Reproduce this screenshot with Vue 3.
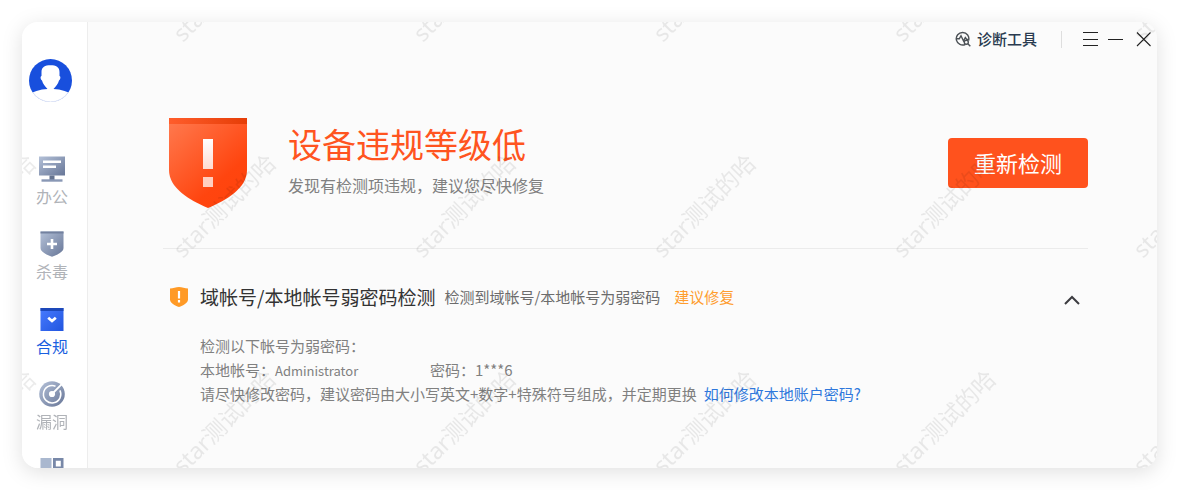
<script setup>
import { ref } from 'vue'

const navItems = [
  { id: 'office', label: '办公' },
  { id: 'antivirus', label: '杀毒' },
  { id: 'compliance', label: '合规' },
  { id: 'vulnerability', label: '漏洞' },
  { id: 'more' },
]
const active = ref('compliance')
const expanded = ref(true)
</script>

<template>
  <div class="page">
    <div class="window">
      <aside class="sidebar">
        <button class="avatar" type="button" aria-label="账户">
          <svg width="43" height="43" viewBox="0 0 43 43">
            <defs>
              <clipPath id="avatar-clip"><circle cx="21.5" cy="21.5" r="21.5" /></clipPath>
            </defs>
            <g clip-path="url(#avatar-clip)">
              <rect width="43" height="43" fill="#184fdd" />
              <path d="M0 36C6 31 14 30 21.5 30S37 31 43 36V43H0Z" fill="#fff" />
              <path d="M12.500 13C12.500 8 16 6.300 21.500 6.300S30.500 8 30.500 13V17C32 17.500 31.500 20.500 30 21.500C29 25 27 27 24.500 30V32H18.500V30C16 27 14 25 13 21.500C11.500 20.500 11 17.500 12.500 17Z" fill="#fff" />
            </g>
            <path d="M4 33.500A21 21 0 0 0 39 33.500" fill="none" stroke="#dfe5f6" />
          </svg>
        </button>

        <nav class="nav">
          <button
            v-for="item in navItems"
            :key="item.id"
            type="button"
            class="nav-item"
            :class="{ active: active === item.id }"
            :aria-label="item.label || '更多'"
            @click="active = item.id"
          >
            <svg v-if="item.id === 'office'" width="26" height="26" viewBox="0 0 26 26">
              <defs>
                <linearGradient id="steel" x1="0" y1="0" x2="1" y2="1">
                  <stop offset="0" stop-color="#b4c1d8" />
                  <stop offset="1" stop-color="#677697" />
                </linearGradient>
              </defs>
              <rect y="0.500" width="26" height="19" fill="url(#steel)" />
              <path d="M4 5.700H22M4 10.700H17" stroke="#fff" stroke-width="2.400" />
              <rect x="10.500" y="19.500" width="5" height="4.500" fill="#65738f" />
              <rect x="2.500" y="23.300" width="21" height="2.400" fill="#8998b5" />
            </svg>
            <svg v-else-if="item.id === 'antivirus'" width="26" height="26" viewBox="0 0 26 26">
              <path d="M1.500 0.500H24.500V17C24.500 21 18 24 13 25.800C8 24 1.500 21 1.500 17Z" fill="url(#steel)" />
              <path d="M1.500 0.500H24.500V2.500H1.500Z" fill="#73819f" />
              <path d="M13 8V18M8 13H18" stroke="#fff" stroke-width="2.600" />
            </svg>
            <svg v-else-if="item.id === 'compliance'" width="26" height="26" viewBox="0 0 26 26">
              <defs>
                <linearGradient id="azure" x1="0" y1="0" x2="1" y2="1">
                  <stop offset="0" stop-color="#487bff" />
                  <stop offset="1" stop-color="#2155df" />
                </linearGradient>
              </defs>
              <rect x="1.500" y="2" width="23" height="23" fill="url(#azure)" />
              <rect x="1.500" y="2" width="23" height="3" fill="#1d48b9" />
              <path d="M9.200 11.700L13 15L16.800 11.700" fill="none" stroke="#fff" stroke-width="2.800" />
            </svg>
            <svg v-else-if="item.id === 'vulnerability'" width="26" height="26" viewBox="0 0 26 26">
              <circle cx="13" cy="13" r="12.800" fill="url(#steel)" />
              <path d="M16.500 5.200A8.700 8.700 0 1 0 20.900 9.300" fill="none" stroke="#fff" stroke-width="1.500" />
              <circle cx="13" cy="13" r="3.100" fill="#fff" />
              <path d="M13 13L23 2.800" stroke="#fff" stroke-width="1.800" />
            </svg>
            <svg v-else width="26" height="26" viewBox="0 0 26 26">
              <rect x="1.500" y="2" width="11" height="11" fill="#aab8cf" />
              <path d="M14 2H24.500V13H14ZM16.800 4.800V10.500H21.800V4.800Z" fill="#7888a8" fill-rule="evenodd" />
              <rect x="1.500" y="14.500" width="11" height="10.500" fill="#8e9dba" />
              <rect x="14" y="14.500" width="10.500" height="10.500" fill="#7888a8" />
            </svg>
            <span v-if="item.label" class="nav-label">{{ item.label }}</span>
          </button>
        </nav>
      </aside>

      <main class="main">
        <header class="topbar">
          <button class="tool" type="button">
            <svg width="16" height="16" viewBox="0 0 16 16" fill="none" stroke="#4d5257" stroke-width="1.400">
              <path d="M10.500 13.300A6.300 6.300 0 1 1 13.600 9.500" />
              <path d="M1.500 7.800H4.300L6 4.700L8.500 10L10.300 6.500L11.800 8.500H14" />
              <circle cx="11.300" cy="11.300" r="2" />
              <path d="M12.800 12.800L15.300 15.300" />
            </svg>
            <span>诊断工具</span>
          </button>
          <span class="separator"></span>
          <div class="window-controls">
            <button type="button" aria-label="菜单">
              <svg width="16" height="16" viewBox="0 0 16 16"><path d="M0 1.500H15M0 8.500H15M0 14.500H15" stroke="#222" stroke-width="1.200" /></svg>
            </button>
            <button type="button" aria-label="最小化">
              <svg width="16" height="16" viewBox="0 0 16 16"><path d="M0 8.500H15" stroke="#222" stroke-width="1.200" /></svg>
            </button>
            <button type="button" class="close" aria-label="关闭">
              <svg width="16" height="16" viewBox="0 0 16 16"><path d="M1 1.500L14.500 15M14.500 1.500L1 15" stroke="#222" stroke-width="1.100" /></svg>
            </button>
          </div>
        </header>

        <section class="summary">
          <svg class="shield" width="78" height="90" viewBox="0 0 78 90">
            <defs>
              <linearGradient id="shield-body" x1="0" y1="0" x2="0.800" y2="1">
                <stop offset="0" stop-color="#ff7b50" />
                <stop offset="0.750" stop-color="#ff450f" />
                <stop offset="1" stop-color="#ff430c" />
              </linearGradient>
              <linearGradient id="shield-top">
                <stop offset="0" stop-color="#ff5d2b" />
                <stop offset="1" stop-color="#e53d07" />
              </linearGradient>
              <linearGradient id="shield-mark" x1="0" y1="0" x2="0" y2="1">
                <stop offset="0" stop-color="#fff" />
                <stop offset="1" stop-color="#ffdcd1" />
              </linearGradient>
              <linearGradient id="shield-shade" x1="0" y1="0" x2="1" y2="0.600">
                <stop offset="0" stop-color="#c92f00" stop-opacity="0.250" />
                <stop offset="0.500" stop-color="#c92f00" stop-opacity="0" />
              </linearGradient>
            </defs>
            <path d="M0 0H78V52C78 70 58 82 39 90C20 82 0 70 0 52Z" fill="url(#shield-body)" />
            <rect width="78" height="6" fill="url(#shield-top)" />
            <path d="M44 21L56 33V70L46 76L34 69L44 69Z" fill="url(#shield-shade)" />
            <rect x="34" y="21" width="10" height="30" fill="url(#shield-mark)" />
            <rect x="34" y="59" width="10" height="10" fill="#ffcfc0" />
          </svg>
          <div class="summary-text">
            <h1>设备违规等级低</h1>
            <p>发现有检测项违规，建议您尽快修复</p>
          </div>
          <button class="recheck" type="button">重新检测</button>
        </section>

        <section class="check">
          <div class="check-head">
            <svg width="18" height="20" viewBox="0 0 18 20">
              <path d="M0 1.500C3 1.500 6 0 9 0S15 1.500 18 1.500V12.500C18 16 13 18.500 9 20C5 18.500 0 16 0 12.500Z" fill="#ff9a26" />
              <path d="M9 4V11.500M9 13V15.500" stroke="#fff" stroke-width="2.200" />
            </svg>
            <h2>域帐号/本地帐号弱密码检测</h2>
            <span class="check-desc">检测到域帐号/本地帐号为弱密码</span>
            <span class="check-advice">建议修复</span>
            <button
              class="toggle"
              type="button"
              aria-label="展开或收起"
              :aria-expanded="expanded"
              @click="expanded = !expanded"
            >
              <svg width="16" height="10" viewBox="0 0 16 10"><path d="M1 9L8 2L15 9" fill="none" stroke="#3c3c40" stroke-width="2" /></svg>
            </button>
          </div>
          <div v-if="expanded" class="check-body">
            <p>检测以下帐号为弱密码：</p>
            <p class="account">
              <span>本地帐号：<span class="user">Administrator</span></span>
              <span>密码：1***6</span>
            </p>
            <p>请尽快修改密码，建议密码由大小写英文+数字+特殊符号组成，并定期更换<a href="#">如何修改本地账户密码?</a></p>
          </div>
        </section>
      </main>

      <svg class="watermark" width="100%" height="100%" aria-hidden="true">
        <defs>
          <pattern id="watermark-tile" x="141" y="115" width="240" height="216" patternUnits="userSpaceOnUse">
            <text transform="translate(20 122) rotate(-45)">star测试的哈</text>
          </pattern>
        </defs>
        <rect width="100%" height="100%" fill="url(#watermark-tile)" />
      </svg>
    </div>
  </div>
</template>

<style>
body {
  margin: 0;
  background: #fff;
}
</style>

<style scoped>
.page {
  box-sizing: border-box;
  height: 100vh;
  padding: 22px;
  font-family: "Noto Sans CJK SC", "Noto Sans", sans-serif;
  font-size: 15px;
  line-height: 24px;
  color: #808080;
  filter: drop-shadow(0 4px 10px rgba(0, 0, 0, 0.12));
}
button {
  margin: 0;
  padding: 0;
  border: 0;
  background: none;
  font: inherit;
  color: inherit;
  cursor: pointer;
}
svg {
  display: block;
  flex: none;
}
h1, h2, p {
  margin: 0;
  font-weight: 400;
}
.window {
  position: relative;
  display: flex;
  height: 100%;
  overflow: hidden;
  border-radius: 16px;
  background: #fbfbfb;
}
.sidebar {
  box-sizing: border-box;
  flex: none;
  width: 66px;
  padding: 37px 0 0 7px;
  border-right: 1px solid #ededed;
  background: #fff;
}
.avatar {
  display: block;
}
.nav {
  display: flex;
  flex-direction: column;
  gap: 23px;
  width: 46px;
  margin-top: 54px;
}
.nav-item {
  display: flex;
  flex-direction: column;
  align-items: center;
  gap: 2px;
  color: #b0b3b8;
}
.nav-item.active {
  color: #1a5fe0;
}
.nav-label {
  font-size: 16px;
}
.main {
  flex: 1;
  min-width: 0;
}
.topbar {
  display: flex;
  align-items: center;
  justify-content: flex-end;
  height: 34px;
  padding-right: 5px;
}
.tool {
  display: flex;
  align-items: center;
  gap: 6px;
  color: #2a3b50;
  font-weight: 500;
}
.separator {
  width: 1px;
  height: 17px;
  margin: 0 21px 0 24px;
  background: #dedede;
}
.window-controls {
  display: flex;
  gap: 9px;
}
.close {
  margin-left: 3px;
}
.summary {
  display: flex;
  align-items: center;
  margin: 0 69px 0 75px;
  padding: 62px 0 40px 6px;
  border-bottom: 1px solid #ebebeb;
}
.summary-text {
  flex: 1;
  margin-left: 41px;
  padding-bottom: 8px;
}
h1 {
  font-size: 34px;
  line-height: 52px;
  color: #ff5420;
}
.summary-text p {
  font-size: 16px;
  line-height: 30px;
}
.recheck {
  width: 140px;
  height: 50px;
  padding-bottom: 2px;
  border-radius: 4px;
  background: #ff521d;
  color: #fff;
  font-size: 22px;
}
.check {
  margin: 0 69px 0 82px;
  padding-top: 34px;
}
.check-head {
  display: flex;
  align-items: center;
  line-height: 28px;
}
h2 {
  margin-left: 12px;
  font-size: 19px;
  color: #333;
}
.check-desc {
  margin-left: 9px;
  color: #6c6c6c;
}
.check-advice {
  margin-left: 14px;
  color: #ff9d2e;
}
.toggle {
  margin: 6px 8px 0 auto;
}
.check-body {
  margin: 23px 0 0 30px;
}
.account {
  display: grid;
  grid-template-columns: 230px auto;
}
.user {
  font-size: 13px;
  line-height: 16px;
}
a {
  margin-left: 7px;
  color: #2f78dc;
  text-decoration: none;
}
.watermark {
  position: absolute;
  inset: 0;
  pointer-events: none;
}
.watermark text {
  font-family: "Noto Sans", "Noto Sans CJK SC", sans-serif;
  font-size: 23px;
  fill: rgba(0, 0, 0, 0.08);
}
</style>
